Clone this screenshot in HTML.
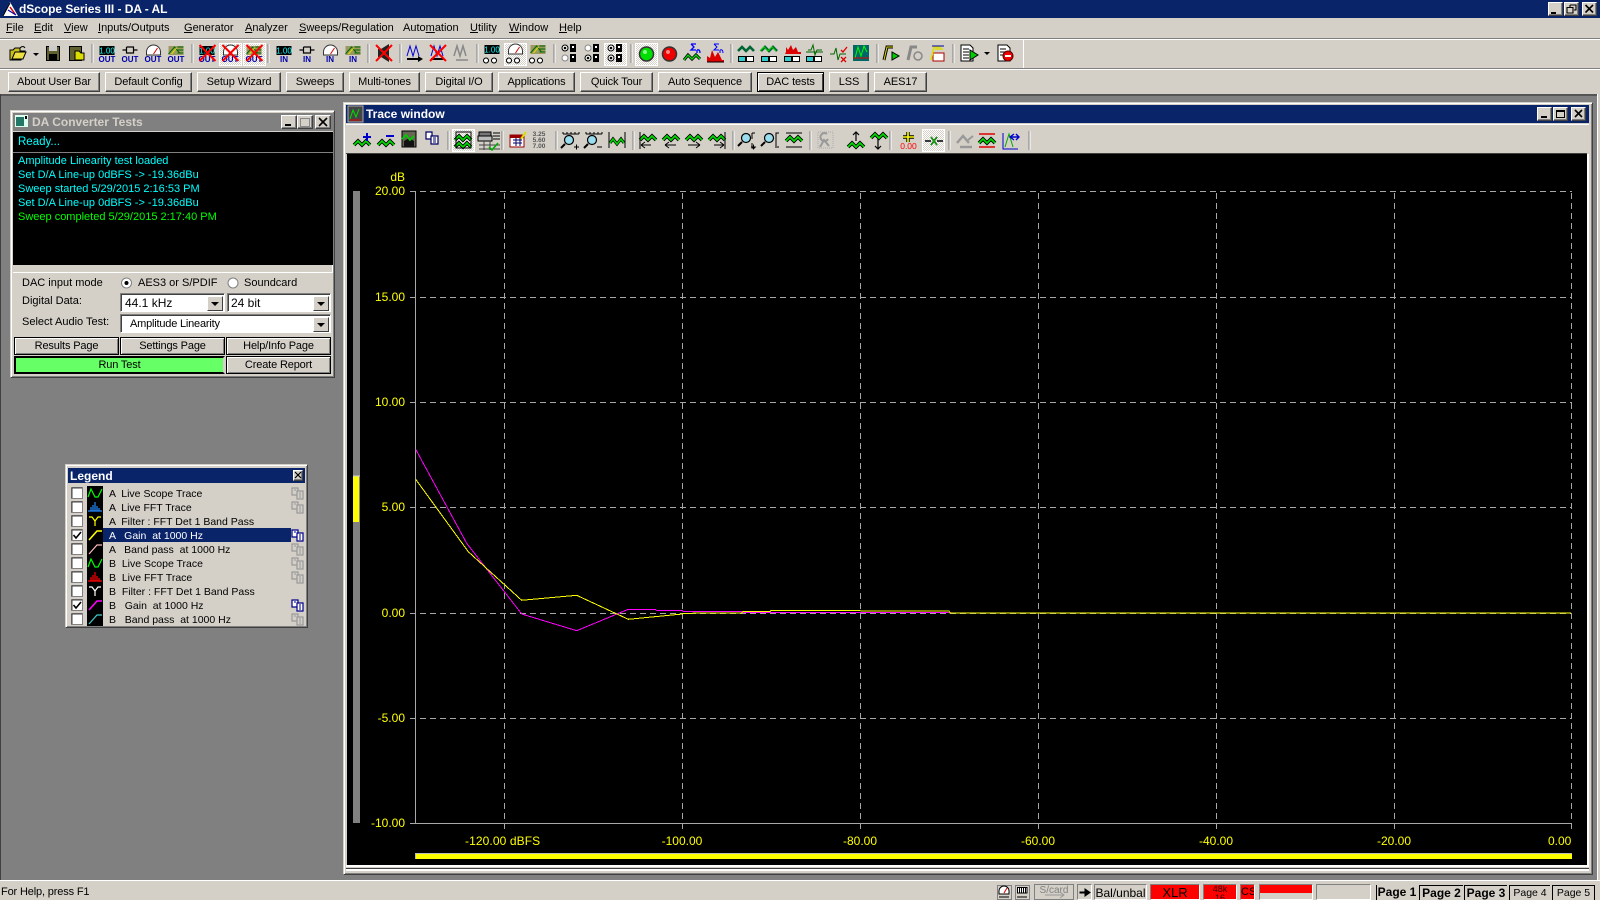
<!DOCTYPE html>
<html><head><meta charset="utf-8"><title>dScope Series III - DA - AL</title>
<style>
html,body{margin:0;padding:0;width:1600px;height:900px;overflow:hidden;background:#d4d0c8}
body{position:relative;font:11px/14px "Liberation Sans",sans-serif;color:#000}
.a{position:absolute;white-space:nowrap}
.b{position:absolute;box-sizing:border-box;background:#d4d0c8;border:1px solid;border-color:#fff #404040 #404040 #fff;box-shadow:inset -1px -1px 0 #808080;text-align:center;white-space:nowrap;line-height:19px;letter-spacing:-.1px}
.u{text-decoration:underline}
.m{position:absolute;top:21px;white-space:nowrap;font-size:11px}
.k{position:absolute;box-sizing:border-box;border:1px solid #000;background:#d4d0c8;box-shadow:inset 1px 1px 0 #fff,inset -1px -1px 0 #808080;text-align:center;white-space:nowrap;font-size:11px;letter-spacing:-.15px;line-height:17px;height:18px}
.c{position:absolute;box-sizing:border-box;background:#fff;border:1px solid;border-color:#808080 #fff #fff #808080;box-shadow:inset 1px 1px 0 #404040;height:19px;font-size:12px;line-height:18px;white-space:nowrap}
.cb{position:absolute;right:1px;top:2px;width:16px;height:15px;box-sizing:border-box;background:#d4d0c8;border:1px solid;border-color:#fff #404040 #404040 #fff}
.cb:after{content:"";position:absolute;left:3px;top:5px;border:4px solid transparent;border-top:4px solid #000;border-bottom:0}
.y{position:absolute;color:#ff0;font-size:12px;line-height:14px;white-space:nowrap}
.yl{text-align:right;width:50px;left:355px}
.xl{text-align:center;width:100px}
.t{position:absolute;font-size:11px;line-height:14px;white-space:nowrap;color:#0ff}
.l{position:absolute;font-size:10.5px;line-height:14px;white-space:pre}
.s{position:absolute;box-sizing:border-box;top:884px;height:16px;border:1px solid;border-color:#808080 #fff #fff #808080;white-space:nowrap;text-align:center;overflow:hidden}
.p{position:absolute;box-sizing:border-box;top:885px;height:15px;white-space:nowrap;text-align:center;overflow:hidden;font-size:11.5px;line-height:14px;border-left:1px solid #000;border-top:1px solid #000;border-right:1px solid #000}
svg text{font-family:"Liberation Sans",sans-serif}
</style></head><body>

<!-- Title bar -->
<div class="a" style="left:0;top:0;width:1600px;height:18px;background:#0a246a"></div>
<div class="a" style="left:19px;top:2px;color:#fff;font-weight:bold;font-size:12px;letter-spacing:-.05px">dScope Series III - DA - AL</div>
<div class="b" style="left:1548px;top:2px;width:15px;height:14px"></div>
<div class="b" style="left:1564px;top:2px;width:15px;height:14px"></div>
<div class="b" style="left:1582px;top:2px;width:15px;height:14px"></div>

<!-- Menu -->
<div class="m" style="left:6px"><span class="u">F</span>ile</div>
<div class="m" style="left:34px"><span class="u">E</span>dit</div>
<div class="m" style="left:64px"><span class="u">V</span>iew</div>
<div class="m" style="left:98px"><span class="u">I</span>nputs/Outputs</div>
<div class="m" style="left:184px"><span class="u">G</span>enerator</div>
<div class="m" style="left:245px"><span class="u">A</span>nalyzer</div>
<div class="m" style="left:299px"><span class="u">S</span>weeps/Regulation</div>
<div class="m" style="left:403px">Auto<span class="u">m</span>ation</div>
<div class="m" style="left:470px"><span class="u">U</span>tility</div>
<div class="m" style="left:509px"><span class="u">W</span>indow</div>
<div class="m" style="left:559px"><span class="u">H</span>elp</div>

<div class="a" style="left:0;top:38px;width:1600px;height:1px;background:#808080"></div>
<div class="a" style="left:0;top:39px;width:1600px;height:1px;background:#fff"></div>
<div class="a" style="left:0;top:68px;width:1600px;height:1px;background:#808080"></div>
<div class="a" style="left:0;top:69px;width:1600px;height:1px;background:#fff"></div>
<div class="a" style="left:1023px;top:40px;width:1px;height:28px;background:#fff"></div>

<!-- User bar -->
<div class="b" style="left:8px;top:72px;width:92px;height:20px">About User Bar</div>
<div class="b" style="left:105px;top:72px;width:87px;height:20px">Default Config</div>
<div class="b" style="left:197px;top:72px;width:84px;height:20px">Setup Wizard</div>
<div class="b" style="left:286px;top:72px;width:58px;height:20px">Sweeps</div>
<div class="b" style="left:349px;top:72px;width:71px;height:20px">Multi-tones</div>
<div class="b" style="left:425px;top:72px;width:68px;height:20px">Digital I/O</div>
<div class="b" style="left:498px;top:72px;width:77px;height:20px">Applications</div>
<div class="b" style="left:580px;top:72px;width:73px;height:20px">Quick Tour</div>
<div class="b" style="left:658px;top:72px;width:94px;height:20px">Auto Sequence</div>
<div class="b" style="left:757px;top:72px;width:67px;height:20px;border:1px solid #000;box-shadow:inset 1px 1px 0 #fff,inset -1px -1px 0 #404040">DAC tests</div>
<div class="b" style="left:829px;top:72px;width:40px;height:20px">LSS</div>
<div class="b" style="left:874px;top:72px;width:53px;height:20px">AES17</div>

<!-- MDI client -->
<div class="a" style="left:0;top:94px;width:1598px;height:786px;background:#808080"></div>
<div class="a" style="left:0;top:94px;width:1598px;height:2px;background:#555"></div>
<div class="a" style="left:0;top:94px;width:1px;height:786px;background:#404040"></div>
<div class="a" style="left:1597px;top:94px;width:1px;height:786px;background:#fff"></div>

<!-- DA Converter Tests -->
<div class="a" style="left:10px;top:110px;width:325px;height:268px;background:#d4d0c8;box-sizing:border-box;border:1px solid;border-color:#d4d0c8 #404040 #404040 #d4d0c8;box-shadow:inset 1px 1px 0 #fff,inset -1px -1px 0 #808080"></div>
<div class="a" style="left:13px;top:113px;width:320px;height:18px;background:#808080"></div>
<div class="a" style="left:32px;top:115px;color:#d4d0c8;font-weight:bold;font-size:12px">DA Converter Tests</div>
<div class="b" style="left:281px;top:115px;width:16px;height:14px"></div>
<div class="b" style="left:297px;top:115px;width:16px;height:14px"></div>
<div class="b" style="left:315px;top:115px;width:16px;height:14px"></div>
<div class="a" style="left:13px;top:132px;width:320px;height:133px;background:#000"></div>
<div class="a" style="left:13px;top:152px;width:320px;height:1px;background:#808080"></div>
<div class="a" style="left:13px;top:265px;width:320px;height:8px;background:#d4d0c8;border-right:1px solid #fff;border-bottom:1px solid #fff;box-sizing:border-box"></div>
<div class="t" style="left:18px;top:135px;font-size:11.5px">Ready...</div>
<div class="t" style="left:18px;top:154px">Amplitude Linearity test loaded</div>
<div class="t" style="left:18px;top:168px">Set D/A Line-up 0dBFS -&gt; -19.36dBu</div>
<div class="t" style="left:18px;top:182px">Sweep started 5/29/2015 2:16:53 PM</div>
<div class="t" style="left:18px;top:196px">Set D/A Line-up 0dBFS -&gt; -19.36dBu</div>
<div class="t" style="left:18px;top:209px;color:#0f0;top:210px">Sweep completed 5/29/2015 2:17:40 PM</div>

<div class="a" style="left:22px;top:276px">DAC input mode</div>
<div class="a" style="left:138px;top:276px">AES3 or S/PDIF</div>
<div class="a" style="left:244px;top:276px">Soundcard</div>
<div class="a" style="left:22px;top:294px">Digital Data:</div>
<div class="a" style="left:22px;top:315px">Select Audio Test:</div>
<div class="c" style="left:120px;top:293px;width:105px;padding-left:4px">44.1 kHz<span class="cb"></span></div>
<div class="c" style="left:227px;top:293px;width:104px;padding-left:3px">24 bit<span class="cb"></span></div>
<div class="c" style="left:120px;top:314px;width:211px;padding-left:9px;font-size:11px;letter-spacing:-.2px;line-height:19px">Amplitude Linearity<span class="cb"></span></div>
<div class="k" style="left:14px;top:337px;width:105px">Results Page</div>
<div class="k" style="left:120px;top:337px;width:105px">Settings Page</div>
<div class="k" style="left:226px;top:337px;width:105px">Help/Info Page</div>
<div class="k" style="left:14px;top:356px;width:211px;background:#66ff66;box-shadow:none;border-width:2px;border-color:#000 #d4d0c8 #000 #000;line-height:15px">Run Test</div>
<div class="k" style="left:226px;top:356px;width:105px">Create Report</div>

<!-- Legend -->
<div class="a" style="left:65px;top:464px;width:243px;height:164px;box-sizing:border-box;background:#d4d0c8;border:1px solid;border-color:#d4d0c8 #404040 #404040 #d4d0c8;box-shadow:inset 1px 1px 0 #fff,inset -1px -1px 0 #808080"></div>
<div class="a" style="left:68px;top:468px;width:237px;height:15px;background:#0a246a"></div>
<div class="a" style="left:70px;top:469px;color:#fff;font-weight:bold;font-size:12px">Legend</div>
<div class="b" style="left:293px;top:470px;width:10px;height:11px"></div>
<div class="a" style="left:103px;top:528px;width:188px;height:14px;background:#0a246a"></div>
<div class="l" style="left:109px;top:487px">A  Live Scope Trace</div>
<div class="l" style="left:109px;top:501px">A  Live FFT Trace</div>
<div class="l" style="left:109px;top:515px">A  Filter : FFT Det 1 Band Pass</div>
<div class="l" style="left:109px;top:529px;color:#fff">A   Gain  at 1000 Hz</div>
<div class="l" style="left:109px;top:543px">A   Band pass  at 1000 Hz</div>
<div class="l" style="left:109px;top:557px">B  Live Scope Trace</div>
<div class="l" style="left:109px;top:571px">B  Live FFT Trace</div>
<div class="l" style="left:109px;top:585px">B  Filter : FFT Det 1 Band Pass</div>
<div class="l" style="left:109px;top:599px">B   Gain  at 1000 Hz</div>
<div class="l" style="left:109px;top:613px">B   Band pass  at 1000 Hz</div>

<!-- Trace window -->
<div class="a" style="left:343px;top:102px;width:1250px;height:773px;box-sizing:border-box;background:#d4d0c8;border:1px solid;border-color:#d4d0c8 #404040 #404040 #d4d0c8;box-shadow:inset 1px 1px 0 #fff,inset -1px -1px 0 #808080"></div>
<div class="a" style="left:346px;top:105px;width:1243px;height:18px;background:#0a246a"></div>
<div class="a" style="left:346px;top:124px;width:1243px;height:1px;background:#fff"></div>
<div class="a" style="left:366px;top:107px;color:#fff;font-weight:bold;font-size:12px">Trace window</div>
<div class="b" style="left:1537px;top:107px;width:15px;height:14px"></div>
<div class="b" style="left:1553px;top:107px;width:15px;height:14px"></div>
<div class="b" style="left:1571px;top:107px;width:15px;height:14px"></div>
<div class="a" style="left:346px;top:153px;width:1241px;height:1px;background:#404040"></div>
<div class="a" style="left:347px;top:154px;width:1240px;height:711px;background:#000"></div>
<div class="a" style="left:1587px;top:154px;width:2px;height:712px;background:#fff"></div>
<div class="a" style="left:346px;top:865px;width:1243px;height:2px;background:#fff"></div>
<div class="a" style="left:346px;top:868px;width:1243px;height:1px;background:#404040"></div>
<div class="a" style="left:346px;top:869px;width:1243px;height:2px;background:#fff"></div>

<!-- Plot labels -->
<div class="y yl" style="top:170px">dB</div>
<div class="y yl" style="top:184px">20.00</div>
<div class="y yl" style="top:290px">15.00</div>
<div class="y yl" style="top:395px">10.00</div>
<div class="y yl" style="top:500px">5.00</div>
<div class="y yl" style="top:606px">0.00</div>
<div class="y yl" style="top:711px">-5.00</div>
<div class="y yl" style="top:816px">-10.00</div>
<div class="y" style="left:465px;top:834px;letter-spacing:.1px">-120.00 dBFS</div>
<div class="y xl" style="left:632px;top:834px">-100.00</div>
<div class="y xl" style="left:810px;top:834px">-80.00</div>
<div class="y xl" style="left:988px;top:834px">-60.00</div>
<div class="y xl" style="left:1166px;top:834px">-40.00</div>
<div class="y xl" style="left:1344px;top:834px">-20.00</div>
<div class="y" style="left:1548px;top:834px">0.00</div>

<!-- Status bar -->
<div class="a" style="left:0;top:880px;width:1600px;height:1px;background:#fff"></div>
<div class="a" style="left:1px;top:885px;font-size:11px;letter-spacing:-.15px">For Help, press F1</div>
<div class="s" style="left:1034px;width:40px;color:#808080;font-size:10px;line-height:11px;border-color:#808080">S/card</div>
<div class="s" style="left:1077px;width:15px"></div>
<div class="s" style="left:1094px;width:53px;font-size:12px;line-height:16px">Bal/unbal</div>
<div class="s" style="left:1150px;width:50px;background:#f00;font-size:13px;line-height:16px">XLR</div>
<div class="s" style="left:1203px;width:34px;background:#f00;font-size:9px;line-height:9px;color:#300">48k<br>16</div>
<div class="s" style="left:1240px;width:15px;background:#f00;font-size:11px;line-height:15px">CS</div>
<div class="s" style="left:1259px;width:54px"><div style="height:8px;background:#f00"></div></div>
<div class="s" style="left:1316px;width:55px"></div>
<div class="p" style="left:1376px;width:41px;font-weight:bold;border-top:0;border-right:0;font-size:12px">Page 1</div>
<div class="p" style="left:1419px;width:44px;font-weight:bold;border-right:0;font-size:12px">Page 2</div>
<div class="p" style="left:1464px;width:43px;font-weight:bold;border-right:0;font-size:12px">Page 3</div>
<div class="p" style="left:1509px;width:41px;font-size:10.5px;border-right:0">Page 4</div>
<div class="p" style="left:1552px;width:43px;font-size:10.5px">Page 5</div>

<!-- Graphics overlay -->
<svg class="a" style="left:0;top:0;pointer-events:none" width="1600" height="900" viewBox="0 0 1600 900" xmlns="http://www.w3.org/2000/svg">
<defs>
<pattern id="dz" width="2" height="2" patternUnits="userSpaceOnUse"><rect width="2" height="2" fill="#fff"/><rect width="1" height="1" fill="#d4d0c8"/><rect x="1" y="1" width="1" height="1" fill="#d4d0c8"/></pattern>
<symbol id="wv" overflow="visible"><path d="M-8 3-4-1 0 3 4-1 8 3" fill="none" stroke="#000" stroke-width="3.6"/><path d="M-8 3-4-1 0 3 4-1 8 3" fill="none" stroke="#0d0" stroke-width="1.8"/></symbol>
<symbol id="wvs" overflow="visible"><path d="M-8 0-4-4 0 0 4-4 8 0" fill="none" stroke="#063" stroke-width="2.6"/></symbol>
<symbol id="m1" overflow="visible"><rect x="-8" y="-10" width="15" height="9" fill="#000"/><text x="-0.5" y="-2.5" font-size="8" fill="#0ff" text-anchor="middle">1.00</text></symbol>
<symbol id="m2" overflow="visible"><path d="M-8-6H-4M3-6H7M-4-9V-3H3V-9H-4" fill="none" stroke="#000" stroke-width="1.2"/></symbol>
<symbol id="m3" overflow="visible"><path d="M-7-1V-4A7 7 0 0 1 7-4V-1Z" fill="#fff" stroke="#333"/><path d="M0-2 4-8" stroke="#d00"/></symbol>
<symbol id="m4" overflow="visible"><rect x="-8" y="-10" width="15" height="9" fill="#9a9a60"/><path d="M-8-2-2-9 3-3M1-9 7-9M1-6 7-6M1-3 7-3" stroke="#060" fill="none"/><path d="M-5-2 0-8" stroke="#dd0"/></symbol>
<symbol id="xx" overflow="visible"><path d="M-8-9 8 7M8-9-8 7" stroke="#f00" stroke-width="2" fill="none"/></symbol>
<symbol id="sig" overflow="visible"><path d="M-8 7-4 2 0 6 4 2 8 6" stroke="#000" stroke-width="3" fill="none"/><path d="M-8 7-4 2 0 6 4 2 8 6" stroke="#0d0" stroke-width="1.4" fill="none"/><path d="M-1-9H4M-1-9 2-6-1-3H4M5-3V0M5-3Q8-4 8 0" stroke="#00f" fill="none" stroke-width="1.3"/></symbol>
<symbol id="ab" overflow="visible"><rect x="2" y="-9" width="6" height="8" fill="#000"/><rect x="2" y="1" width="6" height="8" fill="#000"/><rect x="4" y="-7" width="2" height="2" fill="#fff"/><rect x="4" y="3" width="2" height="2" fill="#fff"/></symbol>
<symbol id="scale" overflow="visible"><path d="M-8-7H8M-8-9V-7M-4-9V-7M0-9V-7M4-9V-7M8-9V-7" stroke="#000" fill="none"/></symbol>
<symbol id="lens" overflow="visible"><circle cx="-1" cy="-1" r="4.5" fill="#9de" stroke="#000" stroke-width="1.2"/><path d="M-5 3-9 7" stroke="#000" stroke-width="2"/></symbol>
<symbol id="cp" overflow="visible"><path d="M-6-5H0V2H-6Z" fill="#fff" stroke="#008" stroke-width="1.2"/><path d="M-1-2H5V6H-1Z" fill="#fff" stroke="#008" stroke-width="1.2"/><path d="M1 0H3M1 2H3M1 4H3M-4-3H-2" stroke="#008"/></symbol>
<symbol id="cpg" overflow="visible"><path d="M-6-5H0V2H-6Z" fill="#d4d0c8" stroke="#999" stroke-width="1.2"/><path d="M-1-2H5V6H-1Z" fill="#d4d0c8" stroke="#999" stroke-width="1.2"/><path d="M1 0H3M1 2H3M1 4H3M-4-3H-2" stroke="#999"/></symbol>
<symbol id="ck" overflow="visible"><rect x="-5.5" y="-5.5" width="11" height="11" fill="#fff" stroke="#808080"/><path d="M-5-5H5M-5-5V5" stroke="#404040" fill="none"/></symbol>
</defs>

<!-- app icon -->
<path d="M10 2 18 16H3Z" fill="#fff"/><path d="M10 7 15 14" stroke="#d00" stroke-width="1.5"/><path d="M8 10 16 15" stroke="#00a" stroke-width="1.2"/><path d="M3 16 10 3" stroke="#000"/>

<!-- window buttons glyphs -->
<path d="M1551 13H1556" stroke="#000" stroke-width="2"/>
<path d="M1570 5H1576V10H1574M1570 5V7M1567 7.5H1573V13H1567Z" fill="none" stroke="#000" stroke-width="1.1"/>
<path d="M1585.5 5 1593 12.5M1593 5 1585.5 12.5" stroke="#000" stroke-width="1.6"/>
<path d="M1541 117H1547" stroke="#000" stroke-width="2"/>
<rect x="1556.5" y="110.5" width="8" height="7" fill="none" stroke="#000"/><path d="M1556 111H1565" stroke="#000" stroke-width="2"/>
<path d="M1575 110 1582 117M1582 110 1575 117" stroke="#000" stroke-width="1.6"/>
<path d="M285 125H291" stroke="#000" stroke-width="2"/>
<rect x="300.5" y="118.5" width="9" height="8" fill="none" stroke="#888"/>
<path d="M319 118 327 126M327 118 319 126" stroke="#000" stroke-width="1.6"/>
<path d="M295 472 301 478M301 472 295 478" stroke="#000" stroke-width="1.2"/>
<!-- DA icon -->
<rect x="15" y="115" width="13" height="12" fill="#dfe"/><rect x="16" y="117" width="8" height="9" fill="#276"/><rect x="25" y="116" width="2" height="3" fill="#000"/>
<!-- trace icon -->
<rect x="348" y="106" width="15" height="16" fill="#444" stroke="#aaa"/><path d="M350 119 353 110 356 117 359 109" fill="none" stroke="#0d0"/><path d="M350 120H361" stroke="#d00"/>

<!-- radios -->
<circle cx="126.5" cy="283" r="5" fill="#fff" stroke="#808080"/><circle cx="126.5" cy="283" r="2" fill="#000"/>
<circle cx="233" cy="283" r="5" fill="#fff" stroke="#808080"/>

<!-- pressed backgrounds top toolbar -->
<g stroke="none">
<rect x="219" y="43" width="22" height="22" fill="url(#dz)"/><rect x="243" y="43" width="22" height="22" fill="url(#dz)"/>
<rect x="504" y="43" width="22" height="22" fill="url(#dz)"/><rect x="604" y="43" width="22" height="22" fill="url(#dz)"/>
<rect x="635" y="43" width="22" height="22" fill="url(#dz)"/>
<rect x="452" y="129" width="22" height="22" fill="url(#dz)"/><rect x="922" y="129" width="22" height="22" fill="url(#dz)"/>
</g>
<g fill="none" stroke="#fff">
<rect x="219.5" y="43.5" width="22" height="22"/><rect x="243.5" y="43.5" width="22" height="22"/><rect x="504.5" y="43.5" width="22" height="22"/><rect x="604.5" y="43.5" width="22" height="22"/><rect x="635.5" y="43.5" width="22" height="22"/><rect x="452.5" y="129.5" width="22" height="22"/><rect x="922.5" y="129.5" width="22" height="22"/>
</g>

<!-- separators top -->
<g stroke="#808080" shape-rendering="crispEdges">
<path d="M92 44V63M192 44V63M268 44V63M368 44V63M400 44V63M477 44V63M554 44V63M631 44V63M731 44V63M877 44V63M953 44V63"/>
<path d="M448 131V150M502 131V150M556 131V150M633 131V150M733 131V150M810 131V150M890 131V150M949 131V150M1029 131V150"/>
</g>
<g stroke="#fff" shape-rendering="crispEdges">
<path d="M93 44V63M193 44V63M269 44V63M369 44V63M401 44V63M478 44V63M555 44V63M632 44V63M732 44V63M878 44V63M954 44V63"/>
<path d="M449 131V150M503 131V150M557 131V150M634 131V150M734 131V150M811 131V150M891 131V150M950 131V150M1030 131V150"/>
</g>

<!-- top toolbar -->
<g>
<path d="M10 59V50H13L15 48H20V51H25L21 60H10Z" fill="#c8c020" stroke="#000"/><path d="M12 59 15 52H26L23 59Z" fill="#eee040" stroke="#000"/><path d="M20 48Q23 45 25 48" stroke="#000" fill="none"/>
<path d="M33 53H39L36 56Z" fill="#000"/>
<rect x="46.5" y="46.5" width="13" height="14" fill="#606030" stroke="#000"/><rect x="49" y="46" width="8" height="5" fill="#ccc"/><rect x="49" y="54" width="8" height="6" fill="#000"/>
<rect x="69.5" y="46.5" width="12" height="14" fill="#606030" stroke="#000"/><path d="M75 54V51H79L81 53H84V60H75Z" fill="#dd0" stroke="#000"/>
</g>
<g fill="#00a" font-size="8" font-weight="bold" text-anchor="middle">
<text x="107" y="62">OUT</text><text x="130" y="62">OUT</text><text x="153" y="62">OUT</text><text x="176" y="62">OUT</text>
<text x="207" y="62">OUT</text><text x="230" y="62">OUT</text><text x="254" y="62">OUT</text>
<text x="284" y="62">IN</text><text x="307" y="62">IN</text><text x="330" y="62">IN</text><text x="353" y="62">IN</text>
</g>
<use href="#m1" x="107.5" y="56"/><use href="#m2" x="130.5" y="56"/><use href="#m3" x="153.5" y="56"/><use href="#m4" x="176.5" y="56"/>
<use href="#m1" x="207.5" y="56"/><use href="#xx" x="207.5" y="54"/><use href="#m3" x="230.5" y="56"/><use href="#xx" x="230.5" y="54"/><use href="#m4" x="254.5" y="56"/><use href="#xx" x="254.5" y="54"/>
<use href="#m1" x="284.5" y="56"/><use href="#m2" x="307.5" y="56"/><use href="#m3" x="330.5" y="56"/><use href="#m4" x="353.5" y="56"/>
<path d="M378 49H381L389 44V62L381 57H378Z" fill="#222"/><use href="#xx" x="384" y="54"/>
<path d="M407 56 410 46 413 56 416 46 419 56" fill="none" stroke="#00d"/><path d="M407 59H420" stroke="#000" stroke-width="2"/><path d="M418 56 423 59 418 62Z" fill="#000"/>
<path d="M431 56 434 46 437 56 440 46 443 56" fill="none" stroke="#00d"/><path d="M431 59H444" stroke="#000" stroke-width="2"/><use href="#xx" x="438" y="54"/>
<path d="M454 56 457 46 460 56 463 46 466 56M456 60H468" fill="none" stroke="#888" stroke-width="1.5"/>
<g><use href="#m1" x="492.5" y="55"/><use href="#m3" x="515.5" y="55"/><use href="#m4" x="538.5" y="55"/>
<path d="M486 58a2.5 2.5 0 1 0 .01 0M494 58a2.5 2.5 0 1 0 .01 0M509 58a2.5 2.5 0 1 0 .01 0M517 58a2.5 2.5 0 1 0 .01 0M532 58a2.5 2.5 0 1 0 .01 0M540 58a2.5 2.5 0 1 0 .01 0" fill="#fff" stroke="#000"/></g>
<circle cx="565" cy="48" r="3" fill="#fff" stroke="#000"/><circle cx="565" cy="48" r="1.3" fill="#000"/><circle cx="565" cy="58" r="3" fill="#fff" stroke="#888"/><use href="#ab" x="568" y="53"/>
<circle cx="588" cy="48" r="3" fill="#fff" stroke="#888"/><circle cx="588" cy="58" r="3" fill="#fff" stroke="#000"/><circle cx="588" cy="58" r="1.3" fill="#000"/><use href="#ab" x="591" y="53"/>
<circle cx="611" cy="48" r="3" fill="#fff" stroke="#000"/><circle cx="611" cy="48" r="1.3" fill="#000"/><circle cx="611" cy="58" r="3" fill="#fff" stroke="#000"/><circle cx="611" cy="58" r="1.3" fill="#000"/><use href="#ab" x="614" y="53"/>
<circle cx="646.5" cy="54" r="7" fill="#0d0" stroke="#333" stroke-width="1.5"/><circle cx="645" cy="52" r="2" fill="#8f8"/>
<circle cx="669.5" cy="54" r="7" fill="#e00" stroke="#333" stroke-width="1.5"/><circle cx="668" cy="52" r="2" fill="#f88"/>
<use href="#sig" x="692" y="53"/>
<path d="M707 60V56L710 58 712 50 715 57 718 52 722 60H724V62H707Z" fill="#d00"/><path d="M707 62H724" stroke="#000"/><path d="M714 44H719M714 44 717 47 714 50H719M720 50V53M720 50Q723 49 723 53" stroke="#00f" fill="none"/>
<g>
<use href="#wvs" x="746" y="51"/><use href="#wvs" x="769" y="51"/><path d="M739 51 743 47 747 51 751 47 755 51" stroke="#0c0" fill="none" transform="translate(21 0)"/>
<path d="M786 52V47L788 50 791 45 793 50 796 47 798 52H801V54H785Z" fill="#d00"/><path d="M808 50H811L813 45 815 55 817 50H822" stroke="#060" fill="none"/><path d="M806 52H823" stroke="#060"/>
<g fill="#3cc" stroke="#000"><rect x="738.5" y="56.5" width="7" height="5"/><rect x="761.5" y="56.5" width="7" height="5"/><rect x="784.5" y="56.5" width="7" height="5"/><rect x="806.5" y="56.5" width="7" height="5"/></g>
<g fill="#fff" stroke="#000"><rect x="746.5" y="56.5" width="7" height="5"/><rect x="769.5" y="56.5" width="7" height="5"/><rect x="792.5" y="56.5" width="7" height="5"/><rect x="814.5" y="56.5" width="7" height="5"/></g>
<path d="M830 54H834L836 48 838 60 840 54H846" stroke="#060" fill="none"/><path d="M841 50 843 52 847 47" stroke="#d00" fill="none" stroke-width="1.3"/><path d="M841 57 846 62M846 57 841 62" stroke="#d00" stroke-width="1.3"/>
<rect x="853" y="45" width="16" height="16" fill="#066"/><path d="M855 58 858 47 861 56 864 46 867 52" stroke="#0f0" fill="none"/><path d="M853 58H869" stroke="#d00"/>
</g>
<path d="M884 60 887 47H893" fill="none" stroke="#000" stroke-width="3"/><path d="M884 60 887 47H893" fill="none" stroke="#dd0"/><path d="M892 52V60L899 56Z" fill="#0c0" stroke="#000"/>
<path d="M908 60 911 47H917" fill="none" stroke="#888" stroke-width="3"/><circle cx="918" cy="56" r="4" fill="none" stroke="#888" stroke-width="1.5"/>
<rect x="933" y="53" width="11" height="8" fill="#fff" stroke="#a00"/><path d="M931 60 934 47H941M935 49H943" fill="none" stroke="#dd0" stroke-width="1.6"/><path d="M932 46H944" stroke="#00a"/>
<path d="M961 45H970L973 48V61H961Z" fill="#fff" stroke="#000"/><path d="M963 49H969M963 52H969M963 55H969M963 58H969" stroke="#000"/><path d="M970 50V60L978 55Z" fill="#0c0" stroke="#000"/>
<path d="M984 52H990L987 55Z" fill="#000"/>
<path d="M998 45H1007L1010 48V61H998Z" fill="#fff" stroke="#000"/><path d="M1000 49H1006M1000 52H1006M1000 55H1006" stroke="#000"/><circle cx="1008" cy="56" r="5" fill="#e00" stroke="#500"/><path d="M1005 56H1011" stroke="#fff" stroke-width="2"/>

<!-- trace toolbar -->
<use href="#wv" x="362" y="142"/><path d="M367 133V141M363 137H371" stroke="#00c" stroke-width="2"/>
<use href="#wv" x="386" y="142"/><path d="M386 136H394" stroke="#00c" stroke-width="2"/>
<rect x="402" y="131" width="14" height="16" fill="#665" stroke="#000"/><path d="M404 147V141L409 138 414 141V147Z" fill="#111"/><path d="M402 139 406 135 410 140 414 136" stroke="#0c0" fill="none" stroke-width="1.8"/>
<path d="M426 132H432V139H426Z" fill="#fff" stroke="#006" stroke-width="1.2"/><path d="M431 136H438V144H431Z" fill="#fff" stroke="#006" stroke-width="1.2"/><path d="M433 138H436M433 140H436M433 142H436" stroke="#006"/>
<use href="#wv" x="463" y="137"/><use href="#wv" x="463" y="144"/><rect x="456" y="132" width="15" height="16" fill="none" stroke="#000"/>
<path d="M479 132H491V136H479Z" fill="#777" stroke="#000"/><rect x="478" y="136" width="14" height="5" fill="#bbb" stroke="#000"/><path d="M479 145H500M479 149H500M484 141V150M490 141V150" stroke="#444"/><path d="M489 147 492 150 498 143" stroke="#0a0" fill="none" stroke-width="1.6"/><path d="M493 133H500M493 136H500M493 139H500" stroke="#000"/>
<rect x="510" y="135" width="14" height="12" fill="#fff" stroke="#900"/><rect x="510" y="135" width="14" height="3" fill="#900"/><path d="M513 140H522M513 143H522M516 138V146M520 138V146" stroke="#006"/><path d="M521 139 526 132" stroke="#dd0" stroke-width="2"/>
<g font-size="6.5" text-anchor="middle" fill="#555" font-weight="bold"><text x="539" y="136">3.25</text><text x="539" y="142">5.60</text><text x="539" y="148">7.00</text></g>
<use href="#scale" x="571" y="141"/><use href="#lens" x="570" y="141"/><path d="M574 147H579M576.5 144.5V149.5" stroke="#000"/>
<use href="#scale" x="594" y="141"/><use href="#lens" x="593" y="141"/><path d="M597 147H602" stroke="#000"/>
<path d="M609 132V148M625 132V148" stroke="#000"/><path d="M610 143 613 139 617 144 621 139 624 143" stroke="#000" stroke-width="3" fill="none"/><path d="M610 143 613 139 617 144 621 139 624 143" stroke="#0d0" stroke-width="1.6" fill="none"/>
<use href="#wv" x="648" y="137"/><path d="M640 132V149M641 145H651M641 145 645 142M641 145 645 148" stroke="#000" fill="none"/>
<use href="#wv" x="671" y="137"/><path d="M665 145H676M665 145 669 142M665 145 669 148" stroke="#000" fill="none"/>
<use href="#wv" x="694" y="137"/><path d="M688 145H700M700 145 696 142M700 145 696 148" stroke="#000" fill="none"/>
<use href="#wv" x="717" y="137"/><path d="M725 132V149M714 145H724M724 145 720 142M724 145 720 148" stroke="#000" fill="none"/>
<use href="#lens" x="747" y="139"/><path d="M751 147H756M753.5 144.5V149.5" stroke="#000" fill="none"/><path d="M755 133H752M752 133V139M752 143V148H755" stroke="#000" fill="none"/>
<use href="#lens" x="770" y="139"/><path d="M775 147H779M779 133H776V146" stroke="#000" fill="none"/>
<path d="M786 133H802M786 147H802" stroke="#000"/><use href="#wv" x="794" y="138"/>
<rect x="818" y="132" width="15" height="16" fill="none" stroke="#aaa" stroke-dasharray="1 1"/><path d="M820 147 824 140 829 146M827 134a4 4 0 1 0 1 5" stroke="#999" fill="none" stroke-width="2"/>
<use href="#wv" x="856" y="144"/><path d="M856 132V141M853 135 856 132 859 135" stroke="#000" fill="none" stroke-width="1.2"/>
<use href="#wv" x="879" y="135"/><path d="M878 139V149M875 146 878 149 881 146" stroke="#000" fill="none" stroke-width="1.2"/>
<path d="M908 132V142M903 137H914" stroke="#000" stroke-width="3.4"/><path d="M908 132V142M903 137H914" stroke="#ff0" stroke-width="1.6"/>
<text x="908.5" y="149" font-size="8.5" fill="#f00" text-anchor="middle">0.00</text>
<path d="M925 141H931M937 141H943M931 137 937 145M937 137 931 145" stroke="#000" stroke-width="1.5"/><path d="M931 137 937 145M937 137 931 145" stroke="#0c0"/>
<path d="M957 143 963 136 969 143M960 147H972" stroke="#999" fill="none" stroke-width="2.4"/><path d="M968 140 973 136" stroke="#999" stroke-width="2"/>
<path d="M979 134H995M979 147H995" stroke="#d00" stroke-width="1.4"/><use href="#wv" x="987" y="140"/>
<path d="M1003 133V149H1018" stroke="#00c" fill="none"/><path d="M1005 147 1009 134 1013 147" stroke="#0a0" fill="none"/><path d="M1010 137H1019M1014 134 1010 137 1014 140M1016 134 1019 137 1016 140" stroke="#00c" fill="none" stroke-width="1.4"/>

<!-- legend icons -->
<g fill="#000"><rect x="87" y="486" width="16" height="14"/><rect x="87" y="500" width="16" height="14"/><rect x="87" y="514" width="16" height="14"/><rect x="87" y="528" width="16" height="14"/><rect x="87" y="542" width="16" height="14"/><rect x="87" y="556" width="16" height="14"/><rect x="87" y="570" width="16" height="14"/><rect x="87" y="584" width="16" height="14"/><rect x="87" y="598" width="16" height="14"/><rect x="87" y="612" width="16" height="14"/></g>
<g fill="none" stroke-width="1.2">
<path d="M88 497 91 489 95 497 98 497 102 489" stroke="#0f0"/>
<path d="M88 511H102M95 502V511M91 507V511M93 505V511M97 506V511M99 508V511" stroke="#28f"/>
<path d="M89 517H92L95 521V526M101 517H98L95 521" stroke="#ff0"/>
<path d="M89 540 97 531H102" stroke="#ff0" stroke-width="1.6"/>
<path d="M89 554 97 545H102" stroke="#fbb"/>
<path d="M88 567 91 559 95 567 98 567 102 559" stroke="#0f0"/>
<path d="M88 581H102M95 572V581M91 577V581M93 575V581M97 576V581M99 578V581" stroke="#f00"/>
<path d="M89 587H92L95 591V596M101 587H98L95 591" stroke="#fff"/>
<path d="M89 610 97 601H102" stroke="#f0f" stroke-width="1.6"/>
<path d="M89 624 97 615H102" stroke="#4cc"/>
</g>
<use href="#ck" x="77" y="493"/><use href="#ck" x="77" y="507"/><use href="#ck" x="77" y="521"/><use href="#ck" x="77" y="535"/><use href="#ck" x="77" y="549"/><use href="#ck" x="77" y="563"/><use href="#ck" x="77" y="577"/><use href="#ck" x="77" y="591"/><use href="#ck" x="77" y="605"/><use href="#ck" x="77" y="619"/>
<path d="M73.5 535 76 538 81 532M73.5 605 76 608 81 602" stroke="#000" stroke-width="1.6" fill="none"/>
<use href="#cpg" x="298" y="493"/><use href="#cpg" x="298" y="507"/><use href="#cp" x="298" y="535"/><use href="#cpg" x="298" y="549"/><use href="#cpg" x="298" y="563"/><use href="#cpg" x="298" y="577"/><use href="#cp" x="298" y="605"/><use href="#cpg" x="298" y="619"/>

<!-- plot: left slider -->
<rect x="353" y="191" width="7" height="632" fill="#808080"/>
<rect x="353" y="476" width="6" height="46" fill="#ff0"/>
<path d="M353 476H360" stroke="#ccc"/>
<!-- bottom yellow bar -->
<rect x="415" y="853" width="1157" height="6" fill="#ff0"/>
<path d="M415.5 859V853.5H1572" stroke="#bbb" fill="none"/>
<!-- grid -->
<g stroke="#a8a8a8" fill="none" shape-rendering="crispEdges" stroke-dasharray="6 4">
<path d="M410 191.5H1572M410 297.5H1572M410 402.5H1572M410 507.5H1572M410 613.5H1572M410 718.5H1572"/>
<path d="M504.5 193V829M682.5 193V829M860.5 193V829M1038.5 193V829M1216.5 193V829M1394.5 193V829M1571.5 193V829"/>
</g>
<path d="M415.5 192V823.5M410 823.5H1572" stroke="#a8a8a8" fill="none" shape-rendering="crispEdges"/>
<!-- traces -->
<polyline fill="none" stroke="#f0f" stroke-width="1" shape-rendering="crispEdges" points="415.7,449.3 466.7,543.3 521.7,614 576.7,630.7 628.3,609.3 655,609.3 656.7,610.3 682.3,610.3 683.3,611.7 741.7,611.7 743,612.3 949,612.5"/>
<polyline fill="none" stroke="#ff0" stroke-width="1" shape-rendering="crispEdges" points="415.7,479.3 468.3,551.7 488.3,570 521.7,600.3 576.7,595.3 628.3,619.3 682.3,614 683.3,613.3 741.7,613 743,611.7 770,611.7 771,610.5 860,610.5 861,611 949,611 950,612.8 1571,612.8"/>

<!-- status icons -->
<rect x="997.5" y="885.5" width="14" height="14" fill="#d4d0c8" stroke="#808080"/>
<path d="M999 894V891A5 5 0 0 1 1009 891V894Z" fill="#fff" stroke="#000"/><path d="M1004 893 1007 888" stroke="#d00"/><path d="M999 897H1009" stroke="#000"/>
<rect x="1015.5" y="885.5" width="14" height="14" fill="#d4d0c8" stroke="#808080"/>
<path d="M1017.5 887.5H1027V893H1017.5ZM1019.5 888V893M1021.5 888V893M1023.5 888V893M1025.5 888V893" fill="#fff" stroke="#000"/><path d="M1017 897H1027" stroke="#000"/>
<path d="M1045 895H1064M1060 892 1064 895 1060 898" stroke="#999" fill="none"/>
<path d="M1080 892H1085V889L1090 892.5 1085 896V893H1080Z" fill="#000" stroke="#000"/>
</svg>
</body></html>
